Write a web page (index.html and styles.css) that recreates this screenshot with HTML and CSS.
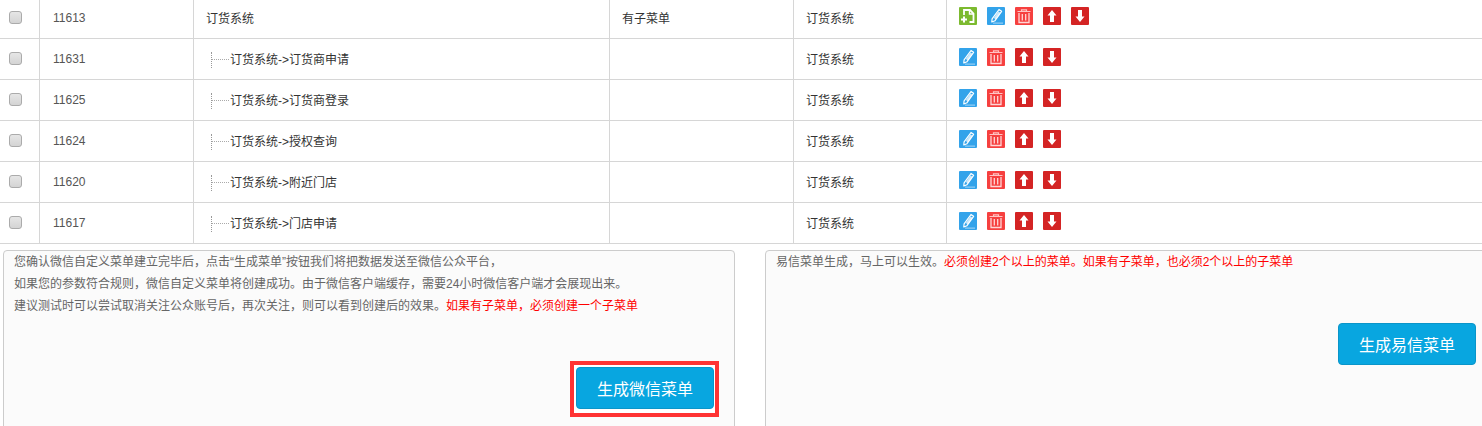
FILE: index.html
```html
<!DOCTYPE html>
<html lang="zh-CN">
<head>
<meta charset="utf-8">
<title>菜单管理</title>
<link rel="stylesheet" href="styles.css">
</head>
<body>
<svg class="defs" width="0" height="0" aria-hidden="true">
  <symbol id="i-add" viewBox="0 0 18 18">
    <rect width="18" height="18" rx="1" fill="#7cba2f"/>
    <path d="M5 8V3h6l3.500 3.500V15h-4" fill="none" stroke="#fff" stroke-width="1.800"/>
    <path d="M10.500 3v4h4" fill="none" stroke="#fff" stroke-width="1.400"/>
    <path d="M5 9.500v6M2 12.500h6" stroke="#fff" stroke-width="2"/>
  </symbol>
  <symbol id="i-edit" viewBox="0 0 18 18">
    <rect width="18" height="18" rx="1" fill="#33a3ea"/>
    <path d="M12 2.500l2.600 1.800-6.600 9.400-3.200 1.300.3-3.200z" fill="none" stroke="#fff" stroke-width="1.200" stroke-linejoin="round"/>
    <path d="M6.800 11l2 1.500 4.600-6.700-2-1.500z" fill="#fff" opacity=".75"/>
    <rect x="6" y="15.600" width="10" height="1" fill="#a9d8f7"/>
  </symbol>
  <symbol id="i-del" viewBox="0 0 18 18">
    <rect width="18" height="18" rx="1" fill="#f6403f"/>
    <path d="M2.500 4.500h13M6.500 4.500V2.800h5v1.700" fill="none" stroke="#ffc4c4" stroke-width="1.200"/>
    <path d="M4 6v9.500h10V6" fill="none" stroke="#ffd6d6" stroke-width="1.300"/>
    <path d="M7.300 7v6.500M10.700 7v6.500" stroke="#ffd6d6" stroke-width="1.300"/>
  </symbol>
  <symbol id="i-up" viewBox="0 0 18 18">
    <rect width="18" height="18" rx="1" fill="#d42424"/>
    <path d="M9 3l4.500 5.500H11V15H7V8.500H4.500z" fill="#fff"/>
  </symbol>
  <symbol id="i-down" viewBox="0 0 18 18">
    <rect width="18" height="18" rx="1" fill="#d42424"/>
    <path d="M9 15l4.500-5.500H11V3H7v6.500H4.500z" fill="#fff"/>
  </symbol>
</svg>

<table class="menu-table">
  <colgroup>
    <col class="c-check"><col class="c-id"><col class="c-name"><col class="c-sub"><col class="c-sys"><col class="c-ops">
  </colgroup>
  <tbody>
    <tr>
      <td class="cell-check"><input class="check" type="checkbox"></td>
      <td class="cell-id">11613</td>
      <td class="cell-text">订货系统</td>
      <td class="cell-text">有子菜单</td>
      <td class="cell-text">订货系统</td>
      <td><div class="ops">
        <svg class="icon"><use href="#i-add"/></svg>
        <svg class="icon"><use href="#i-edit"/></svg>
        <svg class="icon"><use href="#i-del"/></svg>
        <svg class="icon"><use href="#i-up"/></svg>
        <svg class="icon"><use href="#i-down"/></svg>
      </div></td>
    </tr>
    <tr>
      <td class="cell-check"><input class="check" type="checkbox"></td>
      <td class="cell-id">11631</td>
      <td class="cell-text"><div class="child"><span class="branch"></span>订货系统-&gt;订货商申请</div></td>
      <td class="cell-text"></td>
      <td class="cell-text">订货系统</td>
      <td><div class="ops">
        <svg class="icon"><use href="#i-edit"/></svg>
        <svg class="icon"><use href="#i-del"/></svg>
        <svg class="icon"><use href="#i-up"/></svg>
        <svg class="icon"><use href="#i-down"/></svg>
      </div></td>
    </tr>
    <tr>
      <td class="cell-check"><input class="check" type="checkbox"></td>
      <td class="cell-id">11625</td>
      <td class="cell-text"><div class="child"><span class="branch"></span>订货系统-&gt;订货商登录</div></td>
      <td class="cell-text"></td>
      <td class="cell-text">订货系统</td>
      <td><div class="ops">
        <svg class="icon"><use href="#i-edit"/></svg>
        <svg class="icon"><use href="#i-del"/></svg>
        <svg class="icon"><use href="#i-up"/></svg>
        <svg class="icon"><use href="#i-down"/></svg>
      </div></td>
    </tr>
    <tr>
      <td class="cell-check"><input class="check" type="checkbox"></td>
      <td class="cell-id">11624</td>
      <td class="cell-text"><div class="child"><span class="branch"></span>订货系统-&gt;授权查询</div></td>
      <td class="cell-text"></td>
      <td class="cell-text">订货系统</td>
      <td><div class="ops">
        <svg class="icon"><use href="#i-edit"/></svg>
        <svg class="icon"><use href="#i-del"/></svg>
        <svg class="icon"><use href="#i-up"/></svg>
        <svg class="icon"><use href="#i-down"/></svg>
      </div></td>
    </tr>
    <tr>
      <td class="cell-check"><input class="check" type="checkbox"></td>
      <td class="cell-id">11620</td>
      <td class="cell-text"><div class="child"><span class="branch"></span>订货系统-&gt;附近门店</div></td>
      <td class="cell-text"></td>
      <td class="cell-text">订货系统</td>
      <td><div class="ops">
        <svg class="icon"><use href="#i-edit"/></svg>
        <svg class="icon"><use href="#i-del"/></svg>
        <svg class="icon"><use href="#i-up"/></svg>
        <svg class="icon"><use href="#i-down"/></svg>
      </div></td>
    </tr>
    <tr>
      <td class="cell-check"><input class="check" type="checkbox"></td>
      <td class="cell-id">11617</td>
      <td class="cell-text"><div class="child"><span class="branch"></span>订货系统-&gt;门店申请</div></td>
      <td class="cell-text"></td>
      <td class="cell-text">订货系统</td>
      <td><div class="ops">
        <svg class="icon"><use href="#i-edit"/></svg>
        <svg class="icon"><use href="#i-del"/></svg>
        <svg class="icon"><use href="#i-up"/></svg>
        <svg class="icon"><use href="#i-down"/></svg>
      </div></td>
    </tr>
  </tbody>
</table>

<div class="panels">
  <section class="panel">
    <p class="note">您确认微信自定义菜单建立完毕后，点击“生成菜单”按钮我们将把数据发送至微信公众平台，</p>
    <p class="note">如果您的参数符合规则，微信自定义菜单将创建成功。由于微信客户端缓存，需要24小时微信客户端才会展现出来。</p>
    <p class="note">建议测试时可以尝试取消关注公众账号后，再次关注，则可以看到创建后的效果。<span class="warn">如果有子菜单，必须创建一个子菜单</span></p>
    <div class="actions"><span class="highlight"><button class="btn" type="button">生成微信菜单</button></span></div>
  </section>
  <section class="panel">
    <p class="note">易信菜单生成，马上可以生效。<span class="warn">必须创建2个以上的菜单。如果有子菜单，也必须2个以上的子菜单</span></p>
    <div class="actions"><button class="btn" type="button">生成易信菜单</button></div>
  </section>
</div>
</body>
</html>
```

FILE: styles.css
```css
html, body {
  margin: 0;
  padding: 0;
  height: 426px;
  overflow: hidden;
  background: #fff;
}

body {
  font-family: "Liberation Sans", "Noto Sans CJK SC", sans-serif;
  font-size: 12px;
  color: #333;
}

.defs {
  position: absolute;
}

.menu-table {
  width: 1482px;
  margin-top: -2px;
  border-collapse: separate;
  border-spacing: 0;
  table-layout: fixed;
}

.c-check { width: 40px; }
.c-id { width: 154px; }
.c-name { width: 416px; }
.c-sub { width: 184px; }
.c-sys { width: 153px; }

.menu-table td {
  height: 40px;
  padding: 0 0 0 12px;
  border-bottom: 1px solid #d6d6d6;
  border-right: 1px solid #d6d6d6;
  vertical-align: middle;
  line-height: 20px;
}

.menu-table td:last-child {
  border-right: 0;
}

.menu-table td.cell-check {
  padding: 0 0 0 9px;
}

.menu-table td.cell-id {
  padding-left: 13px;
  color: #555;
}

.menu-table td.cell-text {
  padding-top: 2px;
  height: 38px;
}

.check {
  display: block;
  appearance: none;
  width: 13px;
  height: 13px;
  margin: -2px 0 0;
  border: 1px solid #ababab;
  border-radius: 3px;
  background: linear-gradient(#e6e6e6, #d4d4d4);
}

.child {
  display: flex;
  align-items: center;
  padding-left: 5px;
}

.branch {
  width: 19px;
  height: 16px;
  box-sizing: border-box;
  border-left: 1px dotted #999;
  background: repeating-linear-gradient(90deg, #aaa 0 1px, transparent 1px 2px) 0 7px / 100% 1px no-repeat;
}

.ops {
  display: flex;
  gap: 10px;
  margin-top: -4px;
}

.icon {
  display: block;
  width: 18px;
  height: 18px;
}

.panels {
  display: flex;
  gap: 30px;
  margin: 6px 0 0 3px;
}

.panel {
  flex: 0 0 732px;
  box-sizing: border-box;
  height: 220px;
  padding: 0 20px 0 10px;
  border: 1px solid #ccc;
  border-radius: 4px;
  background: #fbfbfb;
  color: #666;
}

.note {
  margin: 0;
  line-height: 22px;
}

.warn {
  color: #f00;
}

.actions {
  display: flex;
  justify-content: flex-end;
  margin-top: 50px;
}

.highlight {
  padding: 2px 1px 4px 2px;
  margin: -6px -5px -8px -6px;
  border: 4px solid #f33;
  background: #fff;
}

.btn {
  display: block;
  width: 138px;
  height: 42px;
  padding: 0;
  border: 1px solid #0a95c9;
  border-radius: 4px;
  background: #08a6e0;
  color: #fff;
  font: 16px "Liberation Sans", "Noto Sans CJK SC", sans-serif;
}
```
